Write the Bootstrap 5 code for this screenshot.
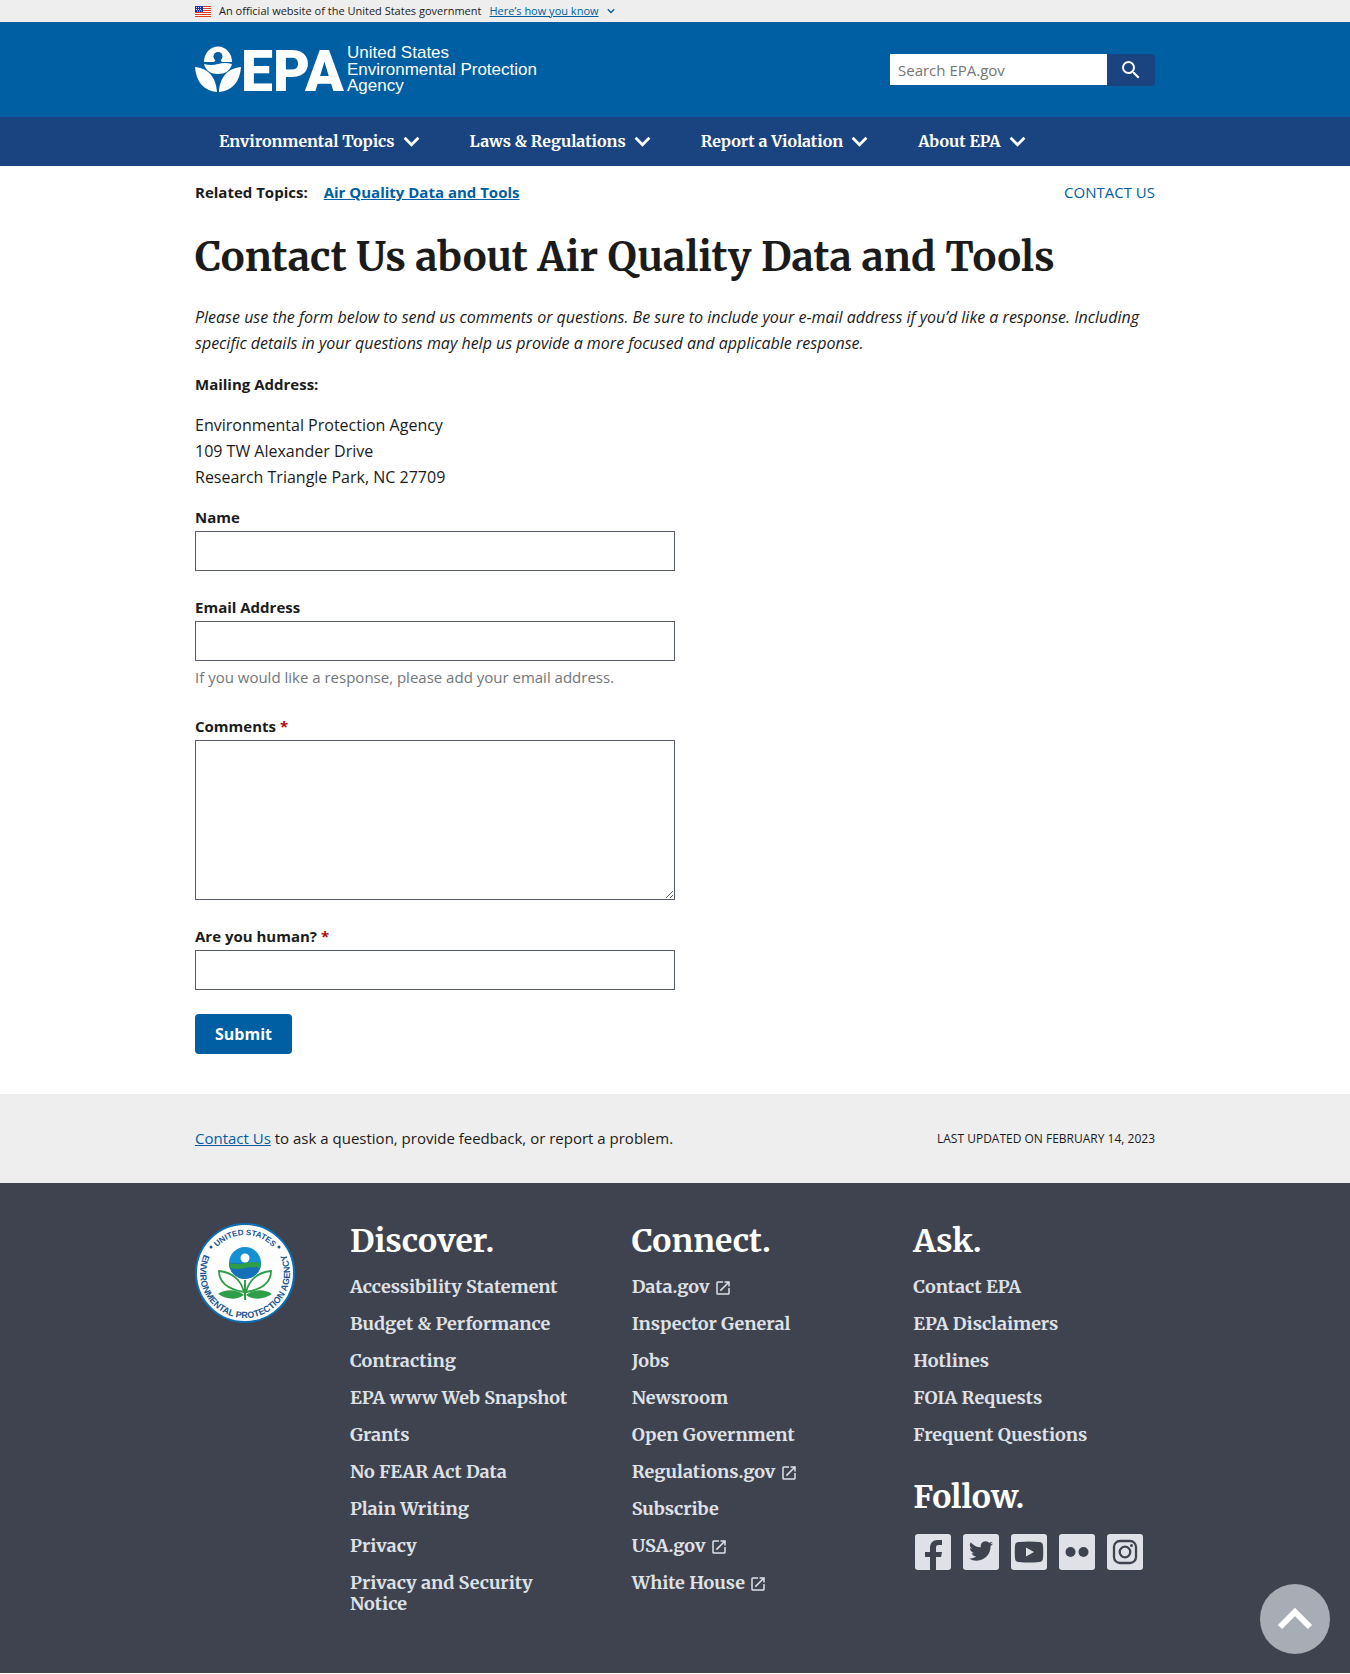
<!DOCTYPE html>
<html lang="en">
<head>
<meta charset="utf-8">
<meta name="viewport" content="width=device-width, initial-scale=1">
<title>Contact Us about Air Quality Data and Tools | US EPA</title>
<link href="https://cdn.jsdelivr.net/npm/bootstrap@5.3.0/dist/css/bootstrap.min.css" rel="stylesheet">
<style>
  :root { --epa-blue: #005ea2; --epa-navy: #1a4480; --ink: #1b1b1b; --slate: #3e434f; --pale: #dfe1e6; --serif: "Merriweather", "DejaVu Serif Condensed", "DejaVu Serif", serif; }
  body { font-family: "Open Sans", sans-serif; font-size: 15px; line-height: 26px; color: var(--ink); }
  a { color: var(--epa-blue); }
  .wrap { max-width: 992px; padding-left: 16px; padding-right: 16px; }
  .gov-banner { background: #eee; font-size: 11px; line-height: 22px; }
  .link-btn { font-size: 11px; line-height: 22px; color: var(--epa-blue); }
  .banner-chev { color: var(--epa-blue); }
  .site-head { background: var(--epa-blue); }
  .site-head .wrap { min-height: 95px; }
  .site-logo svg { overflow: visible; }
  .site-search { width: 265px; }
  .site-search .form-control { height: 31px; border: 0; border-radius: 0; font-size: 15px; padding: 0 8px; }
  .site-search .form-control::placeholder { color: #757575; }
  .site-search .btn { width: 48px; height: 32px; padding: 0; background: var(--epa-navy); border: 0; border-radius: 0 4px 4px 0; }
  .site-nav { background: var(--epa-navy); }
  .site-nav button { font-family: var(--serif); font-weight: 700; font-size: 16px; line-height: 24px; color: #fff; background: none; border: 0; padding: 12px 26px 13px 24px; gap: 8px; }
  .topics { padding-top: 13px; }
  .page-title { font-family: var(--serif); font-weight: 700; font-size: 40px; line-height: 48px; margin: 28px 0 23px; }
  .copy p { margin-bottom: 15px; }
  .copy p:not(.fw-bold) { font-size: 16px; }
  .contact-form { padding-bottom: 40px; }
  .field { margin-bottom: 24px; }
  .field label { display: block; font-weight: 700; line-height: 24px; margin-bottom: 2px; }
  .field .form-control { height: 40px; border: 1px solid #565c65; border-radius: 0; }
  .field textarea.form-control { height: 160px; display: block; }
  .hint { color: #71767a; margin-top: 3px; }
  .req { color: #b50909; }
  .submit-btn { background: var(--epa-blue); color: #fff; font-weight: 700; font-size: 16px; line-height: 16px; padding: 12px 20px; border: 0; border-radius: 4px; }
  .pre-foot { background: #eee; padding: 32px 0; line-height: 25px; }
  .updated { font-size: 12px; }
  .site-foot { background: var(--slate); padding: 40px 0 59px; }
  .foot-cols { gap: 40px; }
  .seal-box { width: 115px; }
  .foot-title { font-family: var(--serif); font-weight: 700; font-size: 32px; line-height: 36px; color: #fff; margin-bottom: 17px; }
  .follow-title { margin-top: 34px; }
  .foot-list { gap: 16px; font-family: var(--serif); font-weight: 700; font-size: 18px; line-height: 21px; }
  .foot-list a { color: var(--pale); text-decoration: none; }
  .foot-list svg { display: inline-block; vertical-align: -4px; }
  .back-top { position: fixed; right: 20px; bottom: 20px; width: 70px; height: 70px; background: #a8acb4; }
</style>
<script src="https://cdn.jsdelivr.net/npm/bootstrap@5.3.0/dist/js/bootstrap.bundle.min.js"></script>
</head>
<body>
<svg width="0" height="0" class="position-absolute" aria-hidden="true">
  <symbol id="chev" viewBox="0 0 16 16"><path d="M1.500 4.500 8 11l6.500-6.500" fill="none" stroke="currentColor" stroke-width="2.600"/></symbol>
  <symbol id="ext" viewBox="0 0 24 24"><path fill="currentColor" d="M19 19H5V5h7V3H5a2 2 0 0 0-2 2v14a2 2 0 0 0 2 2h14c1.100 0 2-.9 2-2v-7h-2v7zM14 3v2h3.600l-9.800 9.800 1.400 1.400L19 6.400V10h2V3h-7z"/></symbol>
</svg>

<div class="gov-banner">
  <div class="container wrap d-flex align-items-center">
    <svg width="16" height="11" viewBox="0 0 16 11" class="me-2" role="img" aria-label="U.S. flag"><rect width="16" height="11" fill="#fff"/><path d="M0 .5h16M0 2.500h16M0 4.500h16M0 6.500h16M0 8.500h16M0 10.500h16" stroke="#db3e1f"/><rect width="8" height="6" fill="#1e33b1"/><path d="M1 1.500h6M1 3.500h6M2 5h5" stroke="#fff" stroke-width=".8" stroke-dasharray="1 1"/></svg>
    <span class="me-2">An official website of the United States government</span>
    <button type="button" class="link-btn btn btn-link p-0 border-0">Here’s how you know</button>
    <svg width="8" height="8" class="ms-2 banner-chev"><use href="#chev"/></svg>
  </div>
</div>

<header>
  <div class="site-head">
    <div class="container wrap d-flex justify-content-between align-items-center">
      <a href="#" class="site-logo" aria-label="EPA home">
        <svg width="350" height="52" viewBox="0 0 350 52" fill="#fff" class="d-block">
          <path d="M9 18a14 15.500 0 0 1 28 0z"/>
          <path d="M9 20q7 2 14 0t14 0c-2 7-7 10-14 10S11 27 9 20z"/>
          <circle cx="23" cy="12.500" r="4.500" fill="#005ea2"/>
          <path d="M20.500 16h5l2 3h-9z" fill="#005ea2"/>
          <path d="M0 23c11 1 21 8 22 25C9 47 1 38 0 23zM46 23c-11 1-21 8-22 25 13-1 21-10 22-25z"/>
          <text x="46" y="47" font-family="Roboto, sans-serif" font-weight="900" font-size="57">EPA</text>
          <g font-family="Liberation Sans, sans-serif" font-size="17">
            <text x="152" y="14">United States</text><text x="152" y="31">Environmental Protection</text><text x="152" y="47">Agency</text>
          </g>
        </svg>
      </a>
      <form class="site-search d-flex align-items-center" role="search">
        <input type="search" class="form-control" placeholder="Search EPA.gov" aria-label="Search EPA.gov">
        <button type="button" class="btn flex-shrink-0 d-flex align-items-center justify-content-center" aria-label="Search"><svg width="24" height="24" viewBox="0 0 24 24" fill="#fff"><path d="M15.500 14h-.79l-.28-.27A6.470 6.470 0 0 0 16 9.500 6.500 6.500 0 1 0 9.500 16c1.610 0 3.090-.59 4.230-1.570l.27.28v.79l5 4.990L20.490 19l-4.990-5zm-6 0a4.500 4.500 0 1 1 0-9 4.500 4.500 0 0 1 0 9z"/></svg></button>
      </form>
    </div>
  </div>
  <nav class="site-nav" aria-label="Primary">
    <div class="container wrap d-flex flex-wrap">
      <button type="button" class="d-flex align-items-center">Environmental Topics <svg width="17" height="17"><use href="#chev"/></svg></button>
      <button type="button" class="d-flex align-items-center">Laws &amp; Regulations <svg width="17" height="17"><use href="#chev"/></svg></button>
      <button type="button" class="d-flex align-items-center">Report a Violation <svg width="17" height="17"><use href="#chev"/></svg></button>
      <button type="button" class="d-flex align-items-center">About EPA <svg width="17" height="17"><use href="#chev"/></svg></button>
    </div>
  </nav>
</header>

<main class="container wrap">
  <div class="topics d-flex justify-content-between">
    <div class="fw-bold"><span class="me-3">Related Topics:</span><a href="#">Air Quality Data and Tools</a></div>
    <a href="#" class="text-uppercase text-decoration-none">Contact Us</a>
  </div>
  <h1 class="page-title">Contact Us about Air Quality Data and Tools</h1>
  <div class="copy">
    <p class="fst-italic">Please use the form below to send us comments or questions. Be sure to include your e-mail address if you’d like a response. Including specific details in your questions may help us provide a more focused and applicable response.</p>
    <p class="fw-bold">Mailing Address:</p>
    <p>Environmental Protection Agency<br>109 TW Alexander Drive<br>Research Triangle Park, NC 27709</p>
  </div>
  <form class="contact-form row">
    <div class="col-md-6 pe-0">
      <div class="field"><label for="name">Name</label><input id="name" type="text" class="form-control"></div>
      <div class="field"><label for="email">Email Address</label><input id="email" type="email" class="form-control" aria-describedby="email-hint"><div class="hint" id="email-hint">If you would like a response, please add your email address.</div></div>
      <div class="field"><label for="comments">Comments <span class="req">*</span></label><textarea id="comments" class="form-control"></textarea></div>
      <div class="field"><label for="human">Are you human? <span class="req">*</span></label><input id="human" type="text" class="form-control"></div>
      <button type="button" class="submit-btn d-block">Submit</button>
    </div>
  </form>
</main>

<div class="pre-foot">
  <div class="container wrap d-flex justify-content-between">
    <div><a href="#">Contact Us</a> to ask a question, provide feedback, or report a problem.</div>
    <div class="updated text-uppercase">Last updated on February 14, 2023</div>
  </div>
</div>

<footer class="site-foot">
  <div class="container wrap d-flex foot-cols">
    <div class="seal-box flex-shrink-0">
      <svg width="100" height="100" viewBox="-50 -50 100 100" role="img" aria-label="EPA seal">
        <circle r="49" fill="#fff" stroke="#0e6eb4" stroke-width="2"/>
        <path id="arc-top" d="M-38 0A38 38 0 0 1 38 0" fill="none"/>
        <path id="arc-low" d="M-38-24A45 45 0 1 0 38-24" fill="none"/>
        <g font-family="Liberation Sans, sans-serif" font-weight="700" fill="#205493" text-anchor="middle">
          <text font-size="8"><textPath href="#arc-top" startOffset="50%">UNITED STATES</textPath></text>
          <text font-size="9"><textPath href="#arc-low" startOffset="50%">ENVIRONMENTAL PROTECTION AGENCY</textPath></text>
        </g>
        <circle cx="-34" cy="-26" r="1.500" fill="#205493"/><circle cx="34" cy="-26" r="1.500" fill="#205493"/>
        <circle cy="-10" r="16" fill="#1590d2"/>
        <path d="M-16-10h32a16 16 0 0 1-32 0z" fill="#1470b8"/>
        <path d="M-16-10q8 2 16 0t16 0l-1 5q-7-2-15 0t-15 0z" fill="#2e9e49"/>
        <circle cy="-15" r="4.500" fill="#fff"/>
        <g fill="#fff" stroke="#2e9e49" stroke-width="1.800"><path d="M-1 19C-4 7-13-1-26-2c0 10 7 18 25 21z"/><path d="M1 19C4 7 13-1 26-2 26 8 19 16 1 19z"/></g>
        <path d="M-1 22C-8 16-20 16-27 21c9 6 19 6 26 1zM1 22c7-6 19-6 26-1-9 6-19 6-26 1zM-1 7h2v20h-2z" fill="#2e9e49"/>
      </svg>
    </div>
    <div class="row row-cols-3 flex-grow-1 flex-nowrap gx-0 foot-cols">
      <div class="col flex-shrink-1">
        <h2 class="foot-title">Discover.</h2>
        <ul class="foot-list list-unstyled d-flex flex-column mb-0">
          <li><a href="#">Accessibility Statement</a></li><li><a href="#">Budget &amp; Performance</a></li><li><a href="#">Contracting</a></li><li><a href="#">EPA www Web Snapshot</a></li><li><a href="#">Grants</a></li><li><a href="#">No FEAR Act Data</a></li><li><a href="#">Plain Writing</a></li><li><a href="#">Privacy</a></li><li><a href="#">Privacy and Security Notice</a></li>
        </ul>
      </div>
      <div class="col flex-shrink-1">
        <h2 class="foot-title">Connect.</h2>
        <ul class="foot-list list-unstyled d-flex flex-column mb-0">
          <li><a href="#">Data.gov <svg width="18" height="18"><use href="#ext"/></svg></a></li><li><a href="#">Inspector General</a></li><li><a href="#">Jobs</a></li><li><a href="#">Newsroom</a></li><li><a href="#">Open Government</a></li><li><a href="#">Regulations.gov <svg width="18" height="18"><use href="#ext"/></svg></a></li><li><a href="#">Subscribe</a></li><li><a href="#">USA.gov <svg width="18" height="18"><use href="#ext"/></svg></a></li><li><a href="#">White House <svg width="18" height="18"><use href="#ext"/></svg></a></li>
        </ul>
      </div>
      <div class="col flex-shrink-1">
        <h2 class="foot-title">Ask.</h2>
        <ul class="foot-list list-unstyled d-flex flex-column mb-0">
          <li><a href="#">Contact EPA</a></li><li><a href="#">EPA Disclaimers</a></li><li><a href="#">Hotlines</a></li><li><a href="#">FOIA Requests</a></li><li><a href="#">Frequent Questions</a></li>
        </ul>
        <h2 class="foot-title follow-title">Follow.</h2>
        <div class="d-flex gap-2">
          <a href="#" aria-label="Facebook"><svg width="40" height="40" viewBox="0 0 40 40"><rect x="2" y="2" width="36" height="36" rx="3" fill="#dfe1e6"/><path fill="#3e434f" d="M17 38V25h-5v-5h5v-4c0-5 3-8 7.500-8H29v5h-3c-2.500 0-3 1-3 3v4h6l-1 5h-5v13z"/></svg></a>
          <a href="#" aria-label="Twitter"><svg width="40" height="40" viewBox="0 0 40 40"><rect x="2" y="2" width="36" height="36" rx="3" fill="#dfe1e6"/><path fill="#3e434f" transform="translate(8 7)" d="M24 4.560c-.88.39-1.830.65-2.830.77a4.930 4.930 0 0 0 2.170-2.720c-.95.56-2 .97-3.130 1.190a4.920 4.920 0 0 0-8.380 4.480A13.980 13.980 0 0 1 1.670 3.150 4.930 4.930 0 0 0 3.190 9.720a4.900 4.900 0 0 1-2.230-.61c-.05 2.280 1.580 4.410 3.950 4.890a4.930 4.930 0 0 1-2.220.08 4.930 4.930 0 0 0 4.600 3.420A9.900 9.900 0 0 1 0 19.540a13.940 13.940 0 0 0 7.550 2.210c9.140 0 14.310-7.720 14-14.650A10 10 0 0 0 24 4.560z"/></svg></a>
          <a href="#" aria-label="YouTube"><svg width="40" height="40" viewBox="0 0 40 40"><rect x="2" y="2" width="36" height="36" rx="3" fill="#dfe1e6"/><path fill="#3e434f" d="M10 10q10-1 20 0 4 0 4 4 .500 6 0 12 0 4-4 4-10 1-20 0-4 0-4-4-.5-6 0-12 0-4 4-4z"/><path fill="#dfe1e6" d="M17 15.500v9l8-4.500z"/></svg></a>
          <a href="#" aria-label="Flickr"><svg width="40" height="40" viewBox="0 0 40 40"><rect x="2" y="2" width="36" height="36" rx="3" fill="#dfe1e6"/><circle cx="13.500" cy="20" r="5" fill="#3e434f"/><circle cx="26.500" cy="20" r="5" fill="#3e434f"/></svg></a>
          <a href="#" aria-label="Instagram"><svg width="40" height="40" viewBox="0 0 40 40"><rect x="2" y="2" width="36" height="36" rx="3" fill="#dfe1e6"/><g fill="none" stroke="#3e434f" stroke-width="2.300"><rect x="9" y="9" width="22" height="22" rx="6"/><circle cx="20" cy="20" r="5.300"/></g><circle cx="26.500" cy="13.500" r="1.500" fill="#3e434f"/></svg></a>
        </div>
      </div>
    </div>
  </div>
</footer>
<a href="#" class="back-top rounded-circle d-flex align-items-center justify-content-center" aria-label="Back to top"><svg width="36" height="24" viewBox="0 0 36 24"><path d="M3 20 18 5l15 15" fill="none" stroke="#fff" stroke-width="6"/></svg></a>
</body>
</html>
